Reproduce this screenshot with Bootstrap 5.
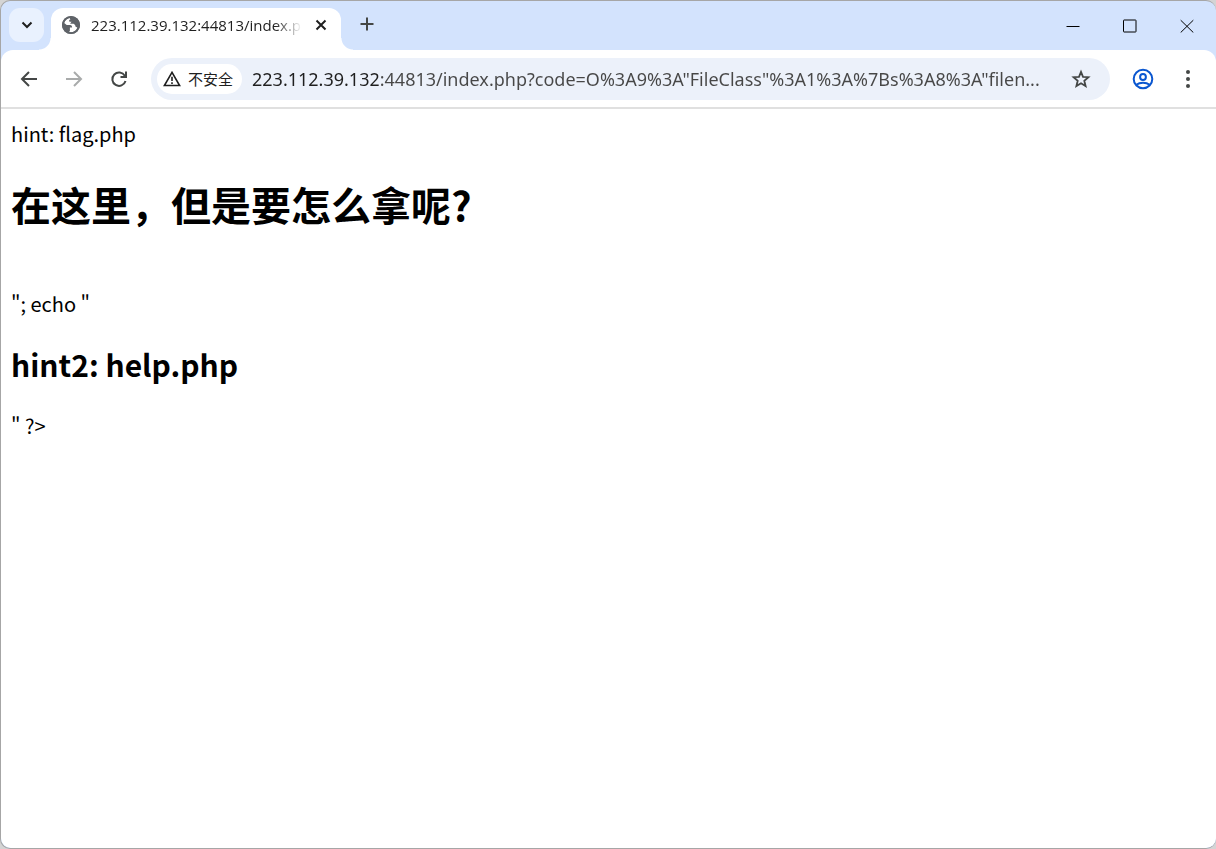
<!DOCTYPE html>
<html lang="zh-CN">
<head>
<meta charset="utf-8">
<meta name="viewport" content="width=device-width, initial-scale=1">
<title>223.112.39.132:44813/index.php</title>
<link href="https://cdn.jsdelivr.net/npm/bootstrap@5.3.0/dist/css/bootstrap.min.css" rel="stylesheet">
<style>
  body { background: #d4d4d4; font-family: "Open Sans", "Noto Sans CJK SC", sans-serif; }
  .window { border: 1px solid #a6a6a6; border-right: 0; border-radius: 10px; background: #d3e3fd; }
  .window button { border: 0; padding: 0; background: transparent; color: #444746; }
  .tab-strip { height: 49px; }
  .window .tab-search { width: 35px; height: 34px; margin: 7px 0 0 8px; border-radius: 11px; background: #e9f1fe; color: #1f1f1f; }
  .tab-flare { width: 12px; height: 12px; background: radial-gradient(circle at 0 0, transparent 11px, #fff 12px); }
  .tab-flare.start { margin-left: -5px; }
  .tab-flare.end { background: radial-gradient(circle at 100% 0, transparent 11px, #fff 12px); }
  .page-tab { width: 290px; margin-top: 7px; padding: 0 11px 8px 10px; border-radius: 12px 12px 0 0; background: #fff; color: #1f1f1f; gap: 10px; }
  .tab-title { font-size: 15px; line-height: 20px; mask-image: linear-gradient(to right, #000 87%, transparent); -webkit-mask-image: linear-gradient(to right, #000 87%, transparent); }
  .window .new-tab { width: 28px; }
  .caption-group { padding: 0 1px 2px 0; }
  .window .caption-btn { width: 57px; color: #000; }
  .toolbar { height: 59px; border-radius: 12px 12px 0 0; border-bottom: 2px solid #e0e0e0; padding: 0 6px 0 5px; background: #fff; }
  .window .tool-btn { width: 45px; height: 42px; padding-bottom: 2px; }
  .window .tool-btn.forward { color: #a9abab; }
  .window .tool-btn.profile { color: #0b57d0; }
  .omnibox { height: 42px; margin-left: 10px; margin-right: 10px; padding: 0 7px 0 6px; border-radius: 21px; background: #ecf1fa; }
  .window .site-chip { height: 30px; width: 85px; padding: 0 9px 0 5px; border-radius: 15px; background: #fff; color: #1f1f1f; font-size: 15px; line-height: 20px; }
  .address { border: 0; outline: 0; padding: 0; margin-left: 10px; height: 30px; font-family: "Noto Sans", "Noto Sans CJK SC", sans-serif; font-size: 18px; text-overflow: ellipsis;
    background: linear-gradient(to right, #1f1f1f 126px, #474747 126px); -webkit-background-clip: text; background-clip: text; color: transparent; }
  .page-view { background: #fff; border-radius: 0 0 10px 10px; padding: 10px; color: #000; font-family: "Noto Sans CJK SC", sans-serif; font-size: 20px; line-height: 29px; }
  .page-view h1 { font-size: 40px; line-height: 58px; margin: 27px 0; font-weight: 700; }
  .page-view h2 { font-size: 30px; line-height: 43px; margin: 25px 0; font-weight: 700; }
</style>
</head>
<body>
<div class="window d-flex flex-column min-vh-100 overflow-hidden">
  <header class="tab-strip d-flex">
    <button class="tab-search d-flex align-items-center justify-content-center" type="button" aria-label="搜索标签页">
      <svg width="12" height="8" viewBox="0 0 12 8" fill="none" stroke="currentColor" stroke-width="2"><path d="M1.500 1.500 6 6l4.500-4.500"/></svg>
    </button>
    <span class="tab-flare start align-self-end"></span>
    <div class="page-tab d-flex align-items-center">
      <svg class="flex-shrink-0" width="20" height="20" viewBox="0 0 20 20"><circle cx="10" cy="10" r="9" fill="#5f6368"/><path d="M8.600 2.900c-2.600.6-4.600 2.500-5.400 5.100l2.500 1.900 3.400.1c1.500.2 2 1.200 2 2.500h-2.200v3.500l-.9 1.100c2.700.5 5-.3 6.700-1.900.7-.9 1.200-1.700 1.600-2.700l-1.700-.7-.5-1.900-1.500-1.100H9.300V8.300l1.300-1.600h-2.200L8.100 5.100l1.300-.7Z" fill="#fff"/><circle cx="10" cy="10" r="8.200" fill="none" stroke="#5f6368" stroke-width="1.800"/></svg>
      <span class="tab-title flex-grow-1 overflow-hidden text-nowrap">223.112.39.132:44813/index.php</span>
      <button class="d-flex" type="button" aria-label="关闭标签页">
        <svg width="18" height="18" viewBox="0 0 18 18" stroke="#1f1f1f" stroke-width="2"><path d="m4.500 4.500 9 9m0-9-9 9"/></svg>
      </button>
    </div>
    <span class="tab-flare end align-self-end"></span>
    <button class="new-tab d-flex align-items-center justify-content-center pb-1" type="button" aria-label="新标签页">
      <svg width="14" height="14" viewBox="0 0 14 14" stroke="currentColor" stroke-width="2"><path d="M7 .5v13M.5 7h13"/></svg>
    </button>
    <div class="caption-group ms-auto d-flex">
      <button class="caption-btn" type="button" aria-label="最小化"><svg width="14" height="14" viewBox="0 0 14 14" stroke="currentColor"><path d="M.5 7.500h13"/></svg></button>
      <button class="caption-btn" type="button" aria-label="最大化"><svg width="14" height="14" viewBox="0 0 14 14" fill="none" stroke="currentColor"><rect x=".5" y="1" width="12.500" height="12" rx=".5"/></svg></button>
      <button class="caption-btn" type="button" aria-label="关闭"><svg width="14" height="14" viewBox="0 0 14 14" stroke="currentColor"><path d="m.7 1.200 12.600 12.300M13.300 1.200.7 13.500"/></svg></button>
    </div>
  </header>
  <nav class="toolbar d-flex align-items-center" aria-label="工具栏">
    <button class="tool-btn" type="button" aria-label="后退"><svg width="18" height="18" viewBox="0 0 18 18" fill="none" stroke="currentColor" stroke-width="2"><path d="M17 9H2.500M9 2 2 9l7 7"/></svg></button>
    <button class="tool-btn forward" type="button" aria-label="前进"><svg width="18" height="18" viewBox="0 0 18 18" fill="none" stroke="currentColor" stroke-width="2"><path d="M1 9h14.500M9 2l7 7-7 7"/></svg></button>
    <button class="tool-btn" type="button" aria-label="重新加载"><svg width="18" height="18" viewBox="0 0 18 18" fill="none" stroke="currentColor" stroke-width="2"><path d="M15.500 11A6.700 6.700 0 1 1 14.800 5.700L15.700 7M16 1.500V7h-5.500"/></svg></button>
    <div class="omnibox flex-grow-1 d-flex align-items-center">
      <button class="site-chip d-flex align-items-center justify-content-between flex-shrink-0" type="button">
        <svg width="20" height="18" viewBox="0 0 20 18"><path d="M10 2.300 2.400 15.500h15.200Z" fill="none" stroke="currentColor" stroke-width="1.600"/><path d="M10 6.800v4.200M10 12.200v1.700" stroke="currentColor" stroke-width="1.600"/></svg>
        <span>不安全</span>
      </button>
      <input class="address flex-grow-1" type="text" aria-label="地址栏" value="223.112.39.132:44813/index.php?code=O%3A9%3A&quot;FileClass&quot;%3A1%3A%7Bs%3A8%3A&quot;filen...">
      <button class="tool-btn" type="button" aria-label="为此标签页添加书签"><svg width="20" height="20" viewBox="0 0 20 20" fill="none" stroke="currentColor" stroke-width="1.800"><path d="m10 2.800 2 5 5.400.4-4.100 3.500 1.300 5.300-4.600-2.800L5.400 17l1.300-5.300-4.100-3.500L8 7.800Z"/></svg></button>
    </div>
    <button class="tool-btn profile" type="button" aria-label="个人资料"><svg width="22" height="22" viewBox="0 0 22 22" fill="none" stroke="currentColor" stroke-width="2"><circle cx="11" cy="11" r="9.300"/><circle cx="11" cy="9" r="2.900"/><path d="M4.300 16.800c3.800-2.900 9.600-2.900 13.400 0"/></svg></button>
    <button class="tool-btn" type="button" aria-label="菜单"><svg width="6" height="20" viewBox="0 0 6 20" fill="currentColor"><circle cx="3" cy="3" r="2"/><circle cx="3" cy="10" r="2"/><circle cx="3" cy="17" r="2"/></svg></button>
  </nav>
  <main class="page-view flex-grow-1">
    hint: flag.php
    <h1>在这里，但是要怎么拿呢?</h1>
    <br>
    "; echo "
    <h2>hint2: help.php</h2>
    " ?&gt;
  </main>
</div>
<script src="https://cdn.jsdelivr.net/npm/bootstrap@5.3.0/dist/js/bootstrap.bundle.min.js"></script>
</body>
</html>
